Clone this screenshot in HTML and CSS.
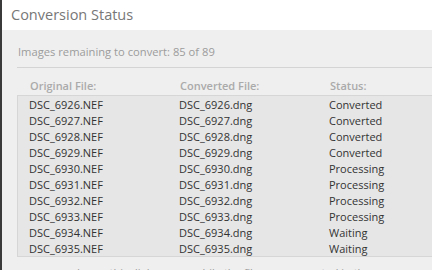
FILE: index.html
```html
<!DOCTYPE html>
<html lang="en">
<head>
<meta charset="UTF-8">
<title>Conversion Status</title>
<link rel="stylesheet" href="styles.css">
</head>
<body>

<div class="dialog">
    <div class="title">Conversion Status</div>
    <div class="content">
        <div class="remaining">Images remaining to convert: 85 of 89</div>
        <div class="head">
            <span>Original File:</span>
            <span>Converted File:</span>
            <span>Status:</span>
        </div>
        <div class="list">
            <div class="row"><span>DSC_6926.NEF</span><span>DSC_6926.dng</span><span>Converted</span></div>
            <div class="row"><span>DSC_6927.NEF</span><span>DSC_6927.dng</span><span>Converted</span></div>
            <div class="row"><span>DSC_6928.NEF</span><span>DSC_6928.dng</span><span>Converted</span></div>
            <div class="row"><span>DSC_6929.NEF</span><span>DSC_6929.dng</span><span>Converted</span></div>
            <div class="row"><span>DSC_6930.NEF</span><span>DSC_6930.dng</span><span>Processing</span></div>
            <div class="row"><span>DSC_6931.NEF</span><span>DSC_6931.dng</span><span>Processing</span></div>
            <div class="row"><span>DSC_6932.NEF</span><span>DSC_6932.dng</span><span>Processing</span></div>
            <div class="row"><span>DSC_6933.NEF</span><span>DSC_6933.dng</span><span>Processing</span></div>
            <div class="row"><span>DSC_6934.NEF</span><span>DSC_6934.dng</span><span>Waiting</span></div>
            <div class="row"><span>DSC_6935.NEF</span><span>DSC_6935.dng</span><span>Waiting</span></div>
        </div>
        <div class="note">Leave this dialog open while the files are converted in the background.</div>
    </div>
</div>

</body>
</html>
```

FILE: styles.css
```css
body {
    margin: 0;
    font-family: "Open Sans", "Noto Sans", sans-serif;
    background-color: #efefef;
    overflow: hidden;
}
.dialog {
    border-left: 2px solid #3a3a3a;
    height: 270px;
    overflow: hidden;
}
.title {
    height: 30px;
    line-height: 30px;
    padding-left: 9px;
    background: white;
    color: #777;
    font-size: 14.5px;
}
.content {
    padding-left: 15px;
}
.remaining {
    height: 37px;
    line-height: 44px;
    padding-left: 1px;
    color: #9c9c9c;
    font-size: 11.2px;
    border-bottom: 1px solid #d4d4d4;
}
.head {
    display: grid;
    grid-template-columns: 150px 150px 1fr;
    height: 27px;
    line-height: 36px;
    padding-left: 13px;
    color: #aaa;
    font-size: 11px;
    font-weight: 600;
}
.list {
    background-color: #e6e6e6;
    border: 1px solid #d6d6d6;
    border-right: none;
    padding: 1px 0 0 11px;
    box-sizing: border-box;
    height: 162px;
}
.row {
    display: grid;
    grid-template-columns: 150px 150px 1fr;
    height: 16px;
    line-height: 16px;
    color: #333;
    font-size: 11px;
}
.note {
    margin-top: 8px;
    padding-left: 60px;
    color: #999;
    font-size: 11px;
}
```
